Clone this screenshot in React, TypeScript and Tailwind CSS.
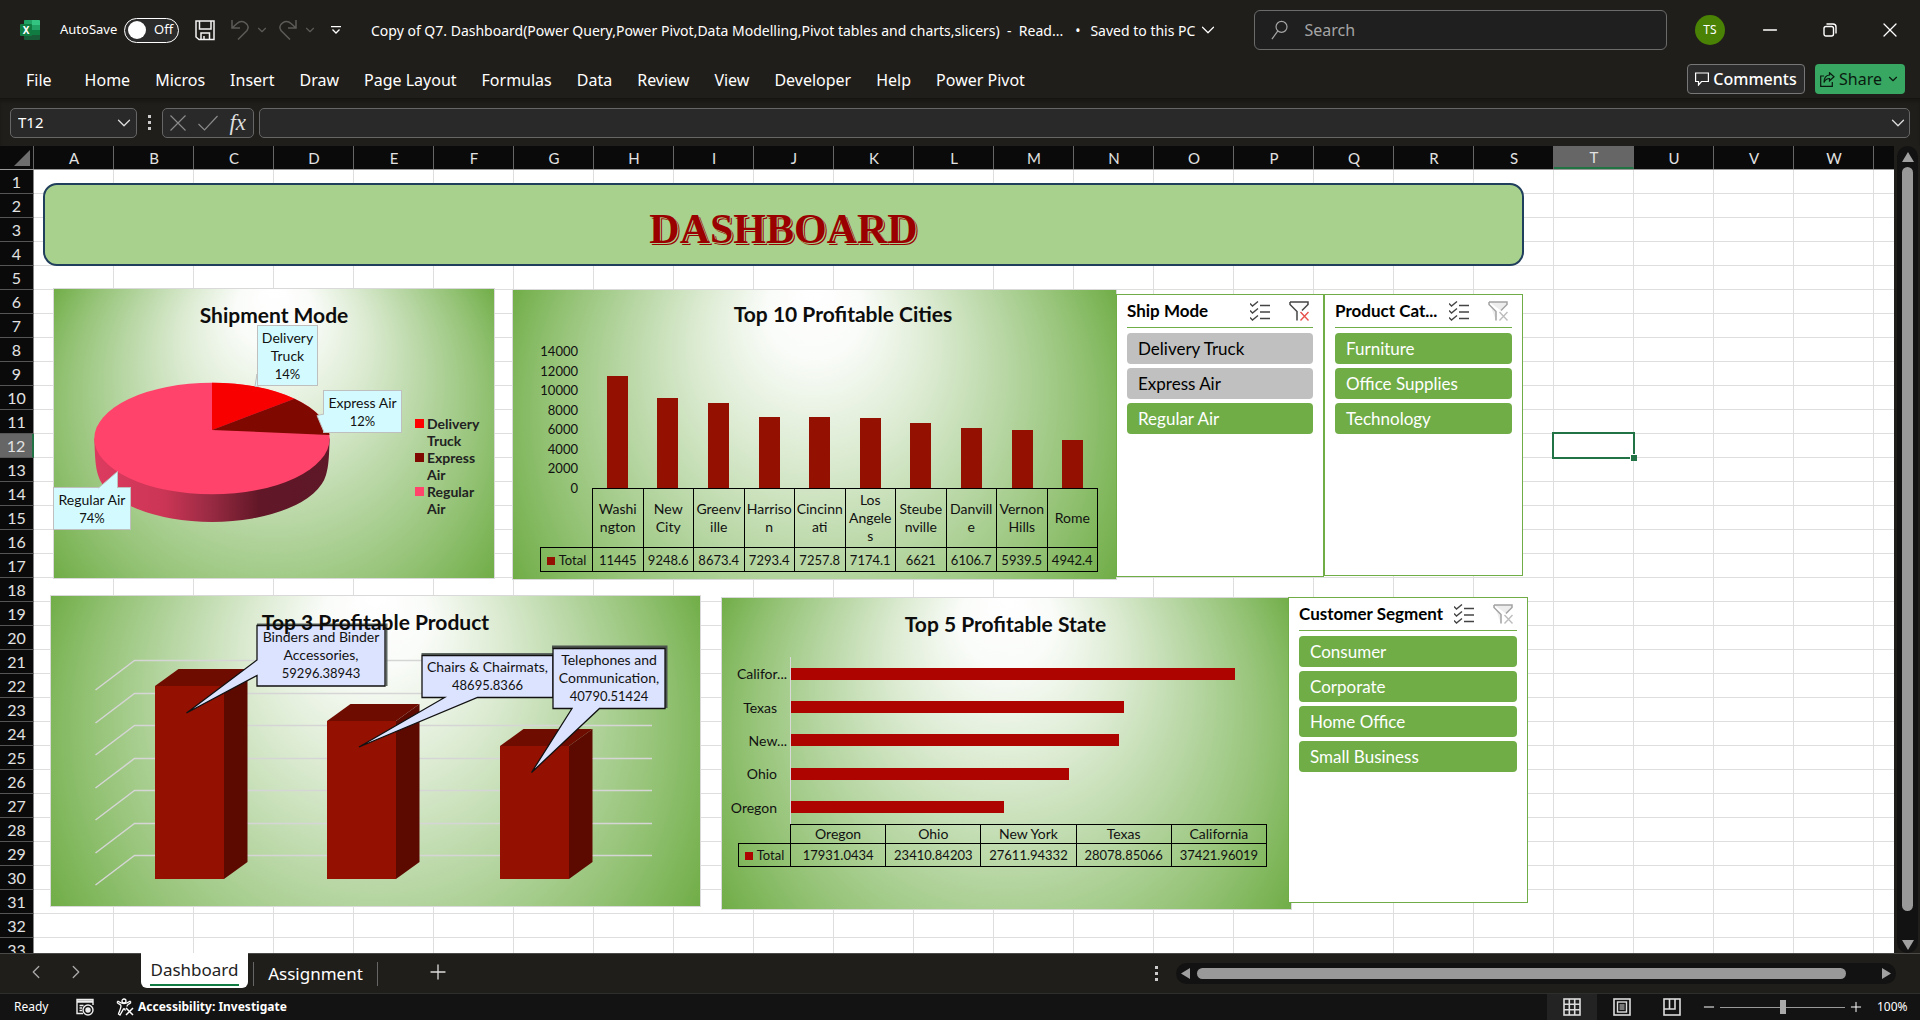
import React from 'react';
import { ChevronDown, ChevronLeft, ChevronRight, X, Plus, Minus } from 'lucide-react';

const UI = "font-['Noto_Sans',sans-serif]";
const CELL = "font-['Lato',sans-serif]";

const COLUMNS = 'ABCDEFGHIJKLMNOPQRSTUVW'.split('');
const ROWS = Array.from({ length: 33 }, (_, i) => i + 1);
const RIBBON_TABS = [
  'Home', 'Micros', 'Insert', 'Draw', 'Page Layout', 'Formulas', 'Data',
  'Review', 'View', 'Developer', 'Help', 'Power Pivot',
];

/* ---------- icons ---------- */

function ExcelLogo() {
  return (
    <svg width="20" height="20" viewBox="0 0 20 20" aria-hidden="true">
      <rect x="4" y="0" width="16" height="20" rx="1" fill="#185c37" />
      <path d="M5 0h7v5H4V1a1 1 0 0 1 1-1z" fill="#21a366" />
      <path d="M12 0h7a1 1 0 0 1 1 1v4h-8z" fill="#33c481" />
      <path d="M12 5h8v5h-8z" fill="#21a366" />
      <path d="M4 5h8v5H4z" fill="#107c41" />
      <path d="M12 10h8v5h-8z" fill="#107c41" />
      <rect x="0" y="4" width="12" height="12" rx="1" fill="#107c41" />
      <text x="6" y="13.500" textAnchor="middle" fontSize="10" fontWeight="700" fill="#fff" fontFamily="Noto Sans">X</text>
    </svg>
  );
}

function SaveIcon() {
  return (
    <svg width="20" height="21" viewBox="0 0 20 21" fill="none" stroke="#f2f2f2" strokeWidth="1.500" aria-hidden="true">
      <path d="M1 1h18v18.500H4L1 17z" />
      <path d="M4.500 1v8h11.500V1" />
      <path d="M6 19.500V13h8.500v6.500M9 19.500V16" />
    </svg>
  );
}

function UndoIcon({ flip = false }: { flip?: boolean }) {
  return (
    <svg width="18" height="20" viewBox="0 0 18 20" fill="none" stroke="#5c5b57" strokeWidth="1.500" aria-hidden="true">
      {flip ? (
        <path d="M17 0v8H9M17 8l-5-4.500C7 -1 -2 4 2 10.500L11 19.500" />
      ) : (
        <path d="M1 0v8h8M1 8l5-4.500C11 -1 20 4 16 10.500L7 19.500" />
      )}
    </svg>
  );
}

function SearchIcon() {
  return (
    <svg width="19" height="23" viewBox="0 0 19 23" fill="none" stroke="#a5a5a5" strokeWidth="1.300" aria-hidden="true">
      <circle cx="11.500" cy="7.500" r="6" />
      <path d="M7.500 12L1 21" />
    </svg>
  );
}

function MultiSelectIcon() {
  return (
    <svg width="20" height="20" viewBox="0 0 20 20" fill="none" stroke="#444" strokeWidth="1.400" aria-hidden="true">
      <path d="M0 2.500l2.500 2.500L8 .500M0 9.500L2.500 12 8 7.500M0 16.500L2.500 19 8 14.500" />
      <path d="M10 4.500h10M10 11h10M10 17.500h10" />
    </svg>
  );
}

function ClearFilterIcon({ active = false }: { active?: boolean }) {
  return (
    <svg width="20" height="20" viewBox="0 0 20 20" fill="none" aria-hidden="true">
      <path
        d="M1 1h18v2.500L13 9.500M1 1v2.500L8 10.500V19.500"
        stroke={active ? '#444' : '#a3a3a3'}
        strokeWidth="1.500"
        fill={active ? '#fafafa' : '#ededed'}
      />
      <path d="M11.500 11l8 8.500M19.500 11l-8 8.500" stroke={active ? '#e8504b' : '#bdbdbd'} strokeWidth="1.400" />
    </svg>
  );
}

function CommentIcon() {
  return (
    <svg width="14" height="14" viewBox="0 0 14 14" fill="none" stroke="#fff" strokeWidth="1.200" aria-hidden="true">
      <path d="M.600 1h12.800v8.500H6.500L3.500 13V9.500H.600z" />
    </svg>
  );
}

function ShareIcon() {
  return (
    <svg width="15" height="15" viewBox="0 0 15 15" fill="none" stroke="#0a1a10" strokeWidth="1.200" aria-hidden="true">
      <path d="M4 4H.700v10.300h11.600V10" />
      <path d="M9.500 .800L14 4.800 9.500 8.800V6.500C6.500 6.500 5 8 4 10.500 4 6 6 3.300 9.500 3z" />
    </svg>
  );
}

function RestoreIcon() {
  return (
    <svg width="14" height="14" viewBox="0 0 14 14" fill="none" stroke="#fff" strokeWidth="1.400" aria-hidden="true">
      <rect x="1" y="3.500" width="9.500" height="9.500" rx="2" />
      <path d="M3.500 1h6.500a3 3 0 0 1 3 3v6.500" />
    </svg>
  );
}

function MacroIcon() {
  return (
    <svg width="18" height="18" viewBox="0 0 18 18" fill="none" stroke="#eee" strokeWidth="1.400" aria-hidden="true">
      <path d="M7 15.500H1V1.500h16V7" />
      <path d="M1 3.500h16" strokeWidth="2.500" />
      <path d="M3.500 7.500h4M3.500 10h2.500M3.500 12.500h2.500" />
      <circle cx="12" cy="12" r="5" />
      <circle cx="12" cy="12" r="2" fill="#eee" />
    </svg>
  );
}

function AccessibilityIcon() {
  return (
    <svg width="18" height="18" viewBox="0 0 18 18" fill="none" stroke="#fff" strokeWidth="1.300" aria-hidden="true">
      <circle cx="8" cy="3" r="2" />
      <path d="M1 4.500c3 2.500 4 2 4 3.500 0 2-1.500 5-2.500 8l1.500 1 3.500-6h1l1 1.500M15 4.500c-3 2.500-4 2-4 4" />
      <path d="M1 4.500l1-1.200c2 1.500 3.500 2.200 6 2.200s4-.700 6-2.200l1 1.200" />
      <path d="M10 10l7 7M17 10l-7 7" strokeWidth="1.500" />
    </svg>
  );
}

function ViewIcon({ kind }: { kind: 'normal' | 'layout' | 'break' }) {
  return (
    <svg width="18" height="18" viewBox="0 0 18 18" fill="none" stroke="#ddd" strokeWidth="1.600" aria-hidden="true">
      <rect x="1" y="1" width="16" height="16" />
      {kind === 'normal' && <path d="M6.300 1v16M11.700 1v16M1 6.300h16M1 11.700h16" />}
      {kind === 'layout' && (
        <>
          <rect x="4.500" y="4" width="9" height="10" strokeWidth="1.400" />
          <path d="M6.500 7h5M6.500 9h5M6.500 11h5" strokeWidth="1" />
        </>
      )}
      {kind === 'break' && <path d="M6.500 1v10M1 11h11V1" />}
    </svg>
  );
}

/* ---------- top bars ---------- */

function TitleBar() {
  return (
    <header className="flex h-[60px] shrink-0 items-center pl-5 text-white">
      <ExcelLogo />
      <label className="ml-5 flex cursor-pointer items-center gap-2 text-[13px]">
        <span className="w-[56px] whitespace-nowrap">AutoSave</span>
        <input type="checkbox" role="switch" className="peer sr-only" />
        <span className="flex h-[25px] w-[55px] items-center gap-2 rounded-full border border-white bg-[#2b2b2b] pl-[3px]">
          <span className="h-[18px] w-[18px] rounded-full bg-white" />
          <span>Off</span>
        </span>
      </label>
      <button aria-label="Save" className="ml-4"><SaveIcon /></button>
      <button aria-label="Undo" className="ml-4"><UndoIcon /></button>
      <button aria-label="Undo history" className="ml-1.5"><ChevronDown size={14} color="#5c5b57" /></button>
      <button aria-label="Redo" className="ml-2.5"><UndoIcon flip /></button>
      <button aria-label="Redo history" className="ml-1.5"><ChevronDown size={14} color="#5c5b57" /></button>
      <button aria-label="Customize Quick Access Toolbar" className="ml-[14px]">
        <svg width="10" height="8" viewBox="0 0 10 8" fill="none" stroke="#fff" strokeWidth="1.300">
          <path d="M0 .700h10M1.500 3.500L5 7l3.500-3.500" />
        </svg>
      </button>
      <h1 className="ml-[30px] flex items-center whitespace-pre text-[14px]">
        Copy of Q7. Dashboard(Power Query,Power Pivot,Data Modelling,Pivot tables and charts,slicers)  -  Read...
      </h1>
      <button className="ml-3 flex items-center gap-0.5 whitespace-nowrap text-[14px]">
        <span className="mr-2">•</span>Saved to this PC<ChevronDown size={22} strokeWidth={1.300} />
      </button>
      <div className="ml-auto flex h-10 w-[413px] items-center gap-4 rounded-md border border-[#6b6b6b] bg-[#1f1f1f] pl-4">
        <SearchIcon />
        <input
          type="search"
          aria-label="Search"
          placeholder="Search"
          className="w-full bg-transparent text-[16px] text-white outline-none placeholder:text-[#a5a5a5]"
        />
      </div>
      <button aria-label="Account" className="ml-7 h-[30px] w-[30px] rounded-full bg-[#498205] text-[12px]">TS</button>
      <button aria-label="Minimize" className="ml-[15px] flex w-[60px] justify-center">
        <Minus size={22} strokeWidth={1.500} />
      </button>
      <button aria-label="Restore" className="flex w-[60px] justify-center"><RestoreIcon /></button>
      <button aria-label="Close" className="flex w-[60px] justify-center"><X size={24} strokeWidth={1.300} /></button>
    </header>
  );
}

function Ribbon() {
  return (
    <nav className="flex h-[38px] shrink-0 items-center whitespace-nowrap pr-[15px] pl-[26px] text-[16px] text-white">
      <button className="mt-0.5 mr-[33px]">File</button>
      <div className="mt-0.5 flex gap-[25px]">
        {RIBBON_TABS.map((tab) => (
          <button key={tab}>{tab}</button>
        ))}
      </div>
      <button className="ml-auto flex h-[30px] w-[118px] items-center justify-center gap-1 rounded border border-[#777] bg-[#2b2b2b] font-medium">
        <CommentIcon />Comments
      </button>
      <button className="ml-[10px] flex h-[30px] w-[90px] items-center justify-center gap-1 rounded bg-[#38a761] text-[#0a1a10]">
        <ShareIcon />Share<ChevronDown size={14} />
      </button>
    </nav>
  );
}

function FormulaBar() {
  return (
    <div className="flex h-12 shrink-0 items-center border-t border-[#141412] px-[10px] shadow-[inset_0_3px_3px_rgba(0,0,0,0.2)]">
      <div className="flex h-[30px] w-[127px] items-center rounded-[5px] border border-[#666] bg-[#292929] pr-px pl-[7px]">
        <input aria-label="Name box" defaultValue="T12" className="w-full min-w-0 bg-transparent text-[15px] text-white outline-none" />
        <ChevronDown size={22} strokeWidth={1.400} color="#ddd" className="shrink-0" />
      </div>
      <div className="flex w-[25px] flex-col items-center gap-[3px]">
        <i className="h-[3px] w-[3px] bg-[#ccc]" />
        <i className="h-[3px] w-[3px] bg-[#ccc]" />
        <i className="h-[3px] w-[3px] bg-[#ccc]" />
      </div>
      <div className="flex h-[30px] w-[92px] items-center justify-between rounded-[5px] border border-[#666] bg-[#292929] px-[7px]">
        <button aria-label="Cancel">
          <svg width="16" height="16" viewBox="0 0 16 16" stroke="#8a8a8a" strokeWidth="1.200"><path d="M.500 .500l15 15M15.500 .500l-15 15" /></svg>
        </button>
        <button aria-label="Enter">
          <svg width="20" height="16" viewBox="0 0 20 16" fill="none" stroke="#8a8a8a" strokeWidth="1.200"><path d="M.500 9l6 6L19.500 1" /></svg>
        </button>
        <button aria-label="Insert function" className="font-['Liberation_Serif',serif] text-[23px] leading-none text-[#ddd] italic">fx</button>
      </div>
      <div className="ml-[5px] flex h-[30px] flex-1 items-center rounded-[5px] border border-[#666] bg-[#292929]">
        <input aria-label="Formula bar" className="w-full bg-transparent px-2 text-[15px] text-white outline-none" />
        <ChevronDown size={22} strokeWidth={1.400} color="#ddd" className="shrink-0" />
      </div>
    </div>
  );
}

/* ---------- charts ---------- */

function ChartFrame({ id, className, children }: { id: string; className: string; children: React.ReactNode }) {
  return (
    <section className={`absolute border border-[#d9d9d9] ${className}`}>
      <svg className="absolute inset-0 h-full w-full" aria-hidden="true">
        <defs>
          <radialGradient id={id} gradientUnits="userSpaceOnUse" cx="50%" cy="50%" r="70.710%" fx="50%" fy="0%">
            <stop offset="0" stopColor="#ffffff" />
            <stop offset="0.140" stopColor="#fafcf9" />
            <stop offset="0.350" stopColor="#dcebd2" />
            <stop offset="0.600" stopColor="#b3d49e" />
            <stop offset="0.800" stopColor="#93c274" />
            <stop offset="1" stopColor="#70ad47" />
          </radialGradient>
        </defs>
        <rect width="100%" height="100%" fill={`url(#${id})`} />
      </svg>
      {children}
    </section>
  );
}

function ChartTitle({ children }: { children: React.ReactNode }) {
  return <h2 className="relative text-center text-[21px] leading-7 font-bold text-[#0d0d0d]">{children}</h2>;
}

function Callout({ lines, className }: { lines: string[]; className: string }) {
  return (
    <p className={`absolute text-center leading-[18px] text-[#111] ${className}`}>
      {lines.map((line) => (
        <span key={line} className={`block whitespace-nowrap ${/^\d/.test(line) ? 'text-[13px]' : 'text-[14px]'}`}>{line}</span>
      ))}
    </p>
  );
}

const SHIPMENT_LEGEND = [
  { lines: ['Delivery', 'Truck'], swatch: 'bg-[#ff0000]' },
  { lines: ['Express', 'Air'], swatch: 'bg-[#7f0900]' },
  { lines: ['Regular', 'Air'], swatch: 'bg-[#ff436b]' },
];

function ShipmentChart() {
  return (
    <ChartFrame id="shipment-fill" className="top-[118px] left-[19px] h-[291px] w-[442px] pt-3">
      <ChartTitle>Shipment Mode</ChartTitle>
      <svg className="absolute inset-0" width="440" height="289" viewBox="54 289 440 289" role="img" aria-label="Pie chart of shipment modes">
        <defs>
          <linearGradient id="pie-side" x1="0" x2="1" y1="0" y2="0">
            <stop offset="0" stopColor="#dc3b5f" />
            <stop offset="0.300" stopColor="#cb3555" />
            <stop offset="0.500" stopColor="#972a42" />
            <stop offset="0.700" stopColor="#611727" />
            <stop offset="1" stopColor="#5e1828" />
          </linearGradient>
        </defs>
        <path d="M94.300 438.500C95 455 95 465 98 475A115 54 0 0 0 326 475C329 465 329 455 329.700 438.500z" fill="url(#pie-side)" />
        <ellipse cx="212" cy="438.500" rx="117.700" ry="55.800" fill="#ff436b" />
        <path d="M212 430V382.700A117.700 55.800 0 0 1 294.500 398.700z" fill="#f90000" />
        <path d="M212 430L294.500 398.700A117.700 55.800 0 0 1 329.500 435z" fill="#7f0900" />
        <path d="M257 374L255 386.500L259 386z" fill="#d3fbff" stroke="#bfbfbf" />
      </svg>
      <Callout lines={['Delivery', 'Truck', '14%']} className="top-[36px] left-[203px] w-[61px] border border-[#bfbfbf] bg-[#d3fbff] pt-[3px] pb-[2px]" />
      <Callout lines={['Express Air', '12%']} className="top-[101px] left-[269px] w-[79px] border border-[#bfbfbf] bg-[#d3fbff] pt-[3px] pb-[2px]" />
      <Callout lines={['Regular Air', '74%']} className="top-[198px] left-[-1px] w-[78px] border border-[#bfbfbf] bg-[#d3fbff] pt-[3px] pb-[2px]" />
      <svg className="absolute inset-0" width="440" height="289" viewBox="54 289 440 289" aria-hidden="true">
        <path d="M98.500 488L117.500 471.500V488" fill="#d3fbff" stroke="#bfbfbf" />
        <path d="M324 414L317 415.500L324 432" fill="#d3fbff" stroke="#bfbfbf" />
      </svg>
      <ul className="absolute top-[126px] left-[361px] text-[14px] leading-[17px] font-bold text-[#222]">
        {SHIPMENT_LEGEND.map(({ lines, swatch }) => (
          <li key={lines[0]} className="flex gap-[3px]">
            <i className={`mt-1 h-[9px] w-[9px] shrink-0 ${swatch}`} />
            <span>{lines[0]}<br />{lines[1]}</span>
          </li>
        ))}
      </ul>
    </ChartFrame>
  );
}

const CITIES: { lines: string[]; value: number }[] = [
  { lines: ['Washi', 'ngton'], value: 11445 },
  { lines: ['New', 'City'], value: 9248.6 },
  { lines: ['Greenv', 'ille'], value: 8673.4 },
  { lines: ['Harriso', 'n'], value: 7293.4 },
  { lines: ['Cincinn', 'ati'], value: 7257.8 },
  { lines: ['Los', 'Angele', 's'], value: 7174.1 },
  { lines: ['Steube', 'nville'], value: 6621 },
  { lines: ['Danvill', 'e'], value: 6106.7 },
  { lines: ['Vernon', 'Hills'], value: 5939.5 },
  { lines: ['Rome'], value: 4942.4 },
];
const CITY_AXIS = [14000, 12000, 10000, 8000, 6000, 4000, 2000, 0];

function CitiesChart() {
  return (
    <ChartFrame id="cities-fill" className="top-[119px] left-[478px] h-[291px] w-[605px] pt-[10px] pr-[18px] pl-[27px]">
      <div className="pl-12"><ChartTitle>Top 10 Profitable Cities</ChartTitle></div>
      <div className="relative mt-[23px] flex h-[137px] text-[13px] text-[#111]">
        <div className="-my-2 flex w-[52px] flex-col justify-between pr-[14px] text-right leading-4">
          {CITY_AXIS.map((tick) => <span key={tick}>{tick}</span>)}
        </div>
        <div className="grid flex-1 grid-cols-10 items-end justify-items-center">
          {CITIES.map(({ lines, value }) => (
            <i key={lines.join('')} className="w-[21px] bg-[#941001]" style={{ height: `${(value / 14000) * 100}%` }} />
          ))}
        </div>
      </div>
      <table className="relative w-full table-fixed border-collapse text-center text-[13px] leading-[18px] text-[#111]">
        <tbody>
          <tr className="h-[59px]">
            <td className="w-[52px]" />
            {CITIES.map(({ lines }) => (
              <th key={lines.join('')} scope="col" className="border border-black p-0 text-[14px] font-normal">
                {lines.map((line) => <span key={line} className="block">{line}</span>)}
              </th>
            ))}
          </tr>
          <tr className="h-6">
            <th scope="row" className="border border-black p-0 font-normal">
              <i className="mr-1 inline-block h-2 w-2 bg-[#941001]" />Total
            </th>
            {CITIES.map(({ lines, value }) => (
              <td key={lines.join('')} className="border border-black p-0">{value}</td>
            ))}
          </tr>
        </tbody>
      </table>
    </ChartFrame>
  );
}

const PRODUCT_BARS = [
  { x: 155, top: 686 },
  { x: 327, top: 721 },
  { x: 500, top: 746 },
];
const PRODUCT_GRID = [660, 693, 725, 758, 790, 823, 855];

function ProductChart() {
  return (
    <ChartFrame id="product-fill" className="top-[425px] left-[16px] h-[312px] w-[651px] pt-3">
      <svg className="absolute inset-0" width="649" height="310" viewBox="51 596 649 310" role="img" aria-label="3-D column chart of products">
        {PRODUCT_GRID.map((y) => (
          <path key={y} d={`M95.500 ${y + 30}L134.500 ${y}.500H652`} fill="none" stroke="#d5d5d5" strokeWidth="1.500" />
        ))}
        {PRODUCT_BARS.map(({ x, top }) => (
          <g key={x}>
            <path d={`M${x} ${top}h69V879h-69z`} fill="#941001" />
            <path d={`M${x} ${top}l23.500 -17h69l-23.500 17z`} fill="#6e0c00" />
            <path d={`M${x + 69} ${top}l23.500 -17V862l-23.500 17z`} fill="#5c0a00" />
          </g>
        ))}
        <path d="M257 624.500H386.500V686" fill="none" stroke="#5f6863" strokeWidth="2" />
        <path d="M257 625.500H385V686H257V675.500L186.500 713L257 660z" fill="#dce3ff" stroke="#111" strokeWidth="1.300" />
        <path d="M421.500 654H553" stroke="#5f6863" strokeWidth="2" />
        <path d="M422 655.500H553V697.500H477.500L359 747L444.600 697.500H422z" fill="#dce3ff" stroke="#111" strokeWidth="1.300" />
        <path d="M552 647H666V708" fill="none" stroke="#4c534f" strokeWidth="3" />
        <path d="M553 648.500H665V708.500H599.500L531.500 772.500L572 708.500H553z" fill="#dce3ff" stroke="#111" strokeWidth="1.300" />
      </svg>
      <ChartTitle>Top 3 Profitable Product</ChartTitle>
      <Callout lines={['Binders and Binder', 'Accessories,', '59296.38943']} className="top-[32px] left-[206px] w-[128px]" />
      <Callout lines={['Chairs & Chairmats,', '48695.8366']} className="top-[62px] left-[371px] w-[131px]" />
      <Callout lines={['Telephones and', 'Communication,', '40790.51424']} className="top-[55px] left-[502px] w-[112px]" />
    </ChartFrame>
  );
}

const STATES = [
  { name: 'Oregon', label: 'Oregon', value: 17931.0434 },
  { name: 'Ohio', label: 'Ohio', value: 23410.84203 },
  { name: 'New York', label: 'New...', value: 27611.94332 },
  { name: 'Texas', label: 'Texas', value: 28078.85066 },
  { name: 'California', label: 'Califor...', value: 37421.96019 },
];

function StateChart() {
  return (
    <ChartFrame id="state-fill" className="top-[427px] left-[687px] h-[313px] w-[571px] pt-3 pr-[24px]">
      <div className="pl-[22px]"><ChartTitle>Top 5 Profitable State</ChartTitle></div>
      <div className="relative mt-[19px] grid h-[167px] grid-rows-5 text-[14px] text-[#111]">
        {[...STATES].reverse().map(({ name, label, value }) => (
          <div key={name} className="flex items-stretch">
            <span className={`flex w-[68px] items-center justify-end ${label.endsWith('...') ? 'pr-[3px]' : 'pr-[13px]'}`}>{label}</span>
            <span className="flex flex-1 items-center border-l border-[#d9d9d9]">
              <i className="h-3 bg-[#ae0400]" style={{ width: `${(value / 40100) * 100}%` }} />
            </span>
          </div>
        ))}
      </div>
      <table className="relative ml-4 w-[529px] table-fixed border-collapse text-center text-[13px] leading-[18px] text-[#111]">
        <tbody>
          <tr className="h-[19px]">
            <td className="w-[52px]" />
            {STATES.map(({ name }) => (
              <th key={name} scope="col" className="border border-black p-0 text-[14px] font-normal">{name}</th>
            ))}
          </tr>
          <tr className="h-[23px]">
            <th scope="row" className="border border-black p-0 font-normal">
              <i className="mr-1 inline-block h-2 w-2 bg-[#ae0400]" />Total
            </th>
            {STATES.map(({ name, value }) => (
              <td key={name} className="border border-black p-0">{value}</td>
            ))}
          </tr>
        </tbody>
      </table>
    </ChartFrame>
  );
}

/* ---------- slicers ---------- */

type SlicerProps = {
  title: string;
  items: { name: string; on?: boolean }[];
  filtered?: boolean;
  className: string;
};

function Slicer({ title, items, filtered = false, className }: SlicerProps) {
  return (
    <section className={`absolute border border-[#70ad47] bg-white px-[10px] ${className}`}>
      <div className="flex h-[33px] items-center border-b border-[#70ad47] pr-1">
        <h2 className="whitespace-nowrap text-[17px] font-bold text-black">{title}</h2>
        <button aria-label="Multi-select" className="ml-auto"><MultiSelectIcon /></button>
        <button aria-label="Clear filter" className="ml-[19px]"><ClearFilterIcon active={filtered} /></button>
      </div>
      <div className="mt-[5px] flex flex-col gap-1">
        {items.map(({ name, on = true }) => (
          <button
            key={name}
            aria-pressed={on}
            className={`h-[31px] rounded pl-[11px] text-left text-[17px] ${on ? 'bg-[#70ad47] text-white' : 'bg-[#c0c0c0] text-black'}`}
          >
            {name}
          </button>
        ))}
      </div>
    </section>
  );
}

/* ---------- worksheet ---------- */

function Worksheet() {
  return (
    <div className={`flex min-w-0 flex-1 flex-col overflow-hidden ${CELL}`}>
      <div className="flex h-6 shrink-0 border-b border-[#9a9a9a] bg-[#0a0a0a] text-[15px] text-[#e2e2e2]">
        <div className="flex w-[34px] shrink-0 items-end justify-end border-r border-[#666] pr-[3px] pb-[3px]">
          <svg width="16" height="16" viewBox="0 0 16 16" aria-hidden="true"><path d="M16 0v16H0z" fill="#6e6e6e" /></svg>
        </div>
        {COLUMNS.map((col) => (
          <div
            key={col}
            className={`flex w-20 shrink-0 items-center justify-center border-r border-[#666] pt-px pl-px ${col === 'T' ? 'border-b-2 border-b-[#217346] bg-[#666]' : ''}`}
          >
            {col}
          </div>
        ))}
      </div>
      <div className="flex min-h-0 flex-1 overflow-hidden">
        <div className="w-[34px] shrink-0 bg-[#0a0a0a] text-[16px] leading-[23px] text-[#e2e2e2]">
          {ROWS.map((row) => (
            <div
              key={row}
              className={`flex h-6 items-center justify-center border-b border-[#555] ${row === 12 ? 'border-r-2 border-r-[#217346] bg-[#666]' : 'border-r border-r-[#888]'}`}
            >
              {row}
            </div>
          ))}
        </div>
        <div className="relative flex-1 overflow-hidden bg-white bg-[linear-gradient(to_right,transparent_79px,#dedede_79px),linear-gradient(to_bottom,transparent_23px,#dedede_23px)] bg-[size:80px_24px]">
          <div className="absolute top-[13px] left-[9px] flex h-[83px] w-[1481px] items-center justify-center rounded-[14px] border-2 border-[#203f5c] bg-[#a9d18e] pt-2">
            <h1 className="font-['Liberation_Serif',serif] text-[42px] leading-none font-bold text-[#9b0000] [text-shadow:1px_1px_0_#a9d18e,2px_2px_0_#9b0000]">DASHBOARD</h1>
          </div>
          <ShipmentChart />
          <CitiesChart />
          <Slicer
            title="Ship Mode"
            filtered
            className="top-[124px] left-[1082px] h-[283px] w-[208px]"
            items={[{ name: 'Delivery Truck', on: false }, { name: 'Express Air', on: false }, { name: 'Regular Air' }]}
          />
          <Slicer
            title="Product Cat..."
            className="top-[124px] left-[1290px] h-[282px] w-[199px]"
            items={[{ name: 'Furniture' }, { name: 'Office Supplies' }, { name: 'Technology' }]}
          />
          <ProductChart />
          <StateChart />
          <Slicer
            title="Customer Segment"
            className="top-[427px] left-[1254px] h-[306px] w-[240px]"
            items={[{ name: 'Consumer' }, { name: 'Corporate' }, { name: 'Home Office' }, { name: 'Small Business' }]}
          />
          <div className="absolute top-[262px] left-[1518px] h-[27px] w-[83px] border-2 border-[#217346]">
            <i className="absolute -right-1 -bottom-1 h-[7px] w-[7px] border-t border-l border-white bg-[#217346]" />
          </div>
        </div>
      </div>
    </div>
  );
}

function VerticalScroll() {
  return (
    <div className="w-[26px] shrink-0 pl-[3px]">
      <div className="flex h-full w-[21px] flex-col items-center rounded-full bg-[#121212] pt-[6px] pb-[3px]">
        <svg width="12" height="10" viewBox="0 0 12 10" aria-hidden="true"><path d="M6 0l6 10H0z" fill="#a0a0a0" /></svg>
        <div className="mt-[5px] w-[11px] flex-1 rounded-full bg-[#999]" />
        <svg className="mt-[29px]" width="12" height="10" viewBox="0 0 12 10" aria-hidden="true"><path d="M6 10L0 0h12z" fill="#a0a0a0" /></svg>
      </div>
    </div>
  );
}

/* ---------- bottom bars ---------- */

function SheetTabs() {
  return (
    <div className="flex h-10 shrink-0 border-t border-[#4a4a48] text-[17px] text-white">
      <button aria-label="Previous sheet" className="ml-[25px] pb-[3px] text-[#aaa]"><ChevronLeft size={22} strokeWidth={1.400} /></button>
      <button aria-label="Next sheet" className="ml-[18px] pb-[3px] text-[#aaa]"><ChevronRight size={22} strokeWidth={1.400} /></button>
      <button className="-mt-px ml-[54px] h-[35px] w-[107px] rounded-b-md bg-white text-[#222]">
        <span className="inline-block border-b-2 border-[#107c41] leading-[28px]">Dashboard</span>
      </button>
      <i className="mt-2 ml-[5px] h-6 w-px bg-[#666]" />
      <button className="w-[123px]">Assignment</button>
      <i className="mt-2 h-6 w-px bg-[#666]" />
      <button aria-label="New sheet" className="ml-12 pb-[3px] text-[#ddd]"><Plus size={24} strokeWidth={1.300} /></button>
      <div className="mr-6 ml-auto flex items-center">
        <div className="mr-[18px] flex flex-col gap-[3px]">
          <i className="h-[3px] w-[3px] bg-[#ccc]" />
          <i className="h-[3px] w-[3px] bg-[#ccc]" />
          <i className="h-[3px] w-[3px] bg-[#ccc]" />
        </div>
        <div className="flex h-[21px] w-[720px] items-center rounded-full bg-[#121212] px-[5px]">
          <svg width="9" height="11" viewBox="0 0 9 11" aria-hidden="true"><path d="M9 0v11L0 5.500z" fill="#a0a0a0" /></svg>
          <div className="mr-9 ml-[7px] h-[11px] flex-1 rounded-full bg-[#999]" />
          <svg width="9" height="11" viewBox="0 0 9 11" aria-hidden="true"><path d="M0 0v11L9 5.500z" fill="#a0a0a0" /></svg>
        </div>
      </div>
    </div>
  );
}

function StatusBar() {
  return (
    <footer className="flex h-[27px] shrink-0 items-center border-t border-[#2e2e2c] bg-[#131313] pr-[9px] pl-[14px] text-[12px] text-white">
      <span className="w-[62px]">Ready</span>
      <button aria-label="Record macro"><MacroIcon /></button>
      <button className="ml-[22px] flex items-center gap-1 font-bold"><AccessibilityIcon />Accessibility: Investigate</button>
      <button aria-label="Normal view" className="ml-auto flex h-full w-[50px] items-center justify-center bg-[#232323]"><ViewIcon kind="normal" /></button>
      <button aria-label="Page layout view" className="flex h-full w-[50px] items-center justify-center"><ViewIcon kind="layout" /></button>
      <button aria-label="Page break preview" className="flex h-full w-[50px] items-center justify-center"><ViewIcon kind="break" /></button>
      <button aria-label="Zoom out" className="ml-1"><Minus size={16} strokeWidth={1.500} /></button>
      <input
        type="range"
        aria-label="Zoom"
        min={0}
        max={200}
        defaultValue={100}
        className="mx-[3px] h-[14px] w-[125px] appearance-none bg-transparent [&::-webkit-slider-runnable-track]:h-px [&::-webkit-slider-runnable-track]:bg-[#999] [&::-webkit-slider-thumb]:-mt-[7px] [&::-webkit-slider-thumb]:h-[14px] [&::-webkit-slider-thumb]:w-[6px] [&::-webkit-slider-thumb]:appearance-none [&::-webkit-slider-thumb]:bg-[#aaa]"
      />
      <button aria-label="Zoom in"><Plus size={16} strokeWidth={1.500} /></button>
      <button className="ml-[13px] w-[34px] text-left">100%</button>
    </footer>
  );
}

export default function App() {
  return (
    <div className={`flex h-screen w-full flex-col overflow-hidden bg-[#201e1a] ${UI}`}>
      <TitleBar />
      <Ribbon />
      <FormulaBar />
      <main className="flex min-h-0 flex-1">
        <Worksheet />
        <VerticalScroll />
      </main>
      <SheetTabs />
      <StatusBar />
    </div>
  );
}
